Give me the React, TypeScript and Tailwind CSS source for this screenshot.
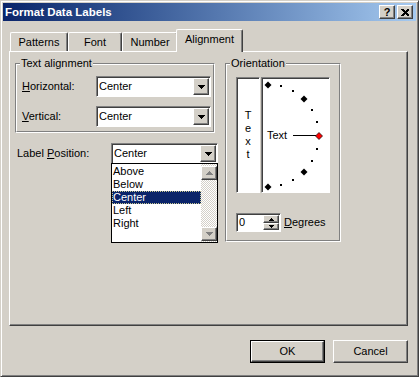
import React from "react";

const RAISED =
  "border border-t-white border-l-white border-r-[#404040] border-b-[#404040] shadow-[inset_-1px_-1px_#808080]";
const SUNKEN =
  "border border-t-[#808080] border-l-[#808080] border-r-white border-b-white shadow-[inset_1px_1px_#404040]";

function Arrow({ color = "#000", up = false }: { color?: string; up?: boolean }) {
  const rows = up ? [3, 2, 1, 0] : [0, 1, 2, 3];
  return (
    <svg width="7" height="4" viewBox="0 0 7 4" shapeRendering="crispEdges">
      {rows.map((r, i) => (
        <rect key={i} x={r} y={i} width={7 - r * 2} height={1} fill={color} />
      ))}
    </svg>
  );
}

function SmallArrow({ up = false, color = "#000" }: { up?: boolean; color?: string }) {
  return (
    <svg width="5" height="3" viewBox="0 0 5 3" shapeRendering="crispEdges">
      {up ? (
        <>
          <rect x={2} y={0} width={1} height={1} fill={color} />
          <rect x={1} y={1} width={3} height={1} fill={color} />
          <rect x={0} y={2} width={5} height={1} fill={color} />
        </>
      ) : (
        <>
          <rect x={0} y={0} width={5} height={1} fill={color} />
          <rect x={1} y={1} width={3} height={1} fill={color} />
          <rect x={2} y={2} width={1} height={1} fill={color} />
        </>
      )}
    </svg>
  );
}

function Combo({ value, className }: { value: string; className: string }) {
  return (
    <div className={`${SUNKEN} ${className} h-[21px] bg-white p-[1px] flex items-center`}>
      <span className="flex-1 pl-[1px] leading-[13px]">{value}</span>
      <div className={`${RAISED} bg-[#d4d0c8] w-[16px] h-[17px] flex items-center justify-center`}>
        <Arrow />
      </div>
    </div>
  );
}

function Group({
  label,
  className,
  children,
}: {
  label: string;
  className: string;
  children: React.ReactNode;
}) {
  return (
    <div
      className={`relative border border-t-[#808080] border-l-[#808080] border-r-white border-b-white ${className}`}
    >
      <div className="h-full border border-t-white border-l-white border-r-[#808080] border-b-[#808080]">
        {children}
      </div>
      <span className="absolute -top-[7px] left-[4px] bg-[#d4d0c8] px-[1px] leading-[13px]">{label}</span>
    </div>
  );
}

function Tab({ label, w, active }: { label: string; w: string; active?: boolean }) {
  return (
    <div
      className={`${w} ${
        active ? "h-[23px] -mb-[1px] -mx-[2px] pt-[3px] relative z-10" : "h-[19px] pt-[3px]"
      } bg-[#d4d0c8] rounded-t-[2px] border-l border-t border-r border-t-white border-l-white border-r-[#404040] shadow-[inset_-1px_0_#808080] text-center leading-[13px]`}
    >
      {label}
    </div>
  );
}

function OrientationDial() {
  const cx = 6;
  const cy = 57.5;
  const r = 51;
  const pt = (deg: number) => {
    const a = (deg * Math.PI) / 180;
    return [cx + r * Math.sin(a), cy - r * Math.cos(a)];
  };
  const dots = [15, 30, 60, 75, 105, 120, 150, 165].map(pt);
  const diamonds = [0, 45, 135, 180].map(pt);
  const diamond = (x: number, y: number) =>
    `${x},${y - 3.5} ${x + 3.5},${y} ${x},${y + 3.5} ${x - 3.5},${y}`;
  const [rx, ry] = pt(90);
  return (
    <svg className="absolute left-0 top-0" width="67" height="114" viewBox="0 0 67 114">
      {dots.map(([x, y], i) => (
        <rect key={i} x={Math.round(x) - 1} y={Math.round(y) - 1} width={2} height={2} fill="#000" />
      ))}
      {diamonds.map(([x, y], i) => (
        <polygon key={i} points={diamond(Math.round(x), Math.round(y))} fill="#000" />
      ))}
      <rect x={31} y={57} width={23} height={1} fill="#000" />
      <polygon points={diamond(Math.round(rx), Math.round(ry))} fill="#ff0000" stroke="#000" strokeWidth={0.7} />
    </svg>
  );
}

export default function App() {
  return (
    <div
      className="w-[419px] h-[377px] bg-[#d4d0c8] border border-t-[#d4d0c8] border-l-[#d4d0c8] border-r-[#404040] border-b-[#404040] shadow-[inset_1px_1px_white,inset_-1px_-1px_#808080] p-[2px] flex flex-col text-[11px] text-black"
      style={{ fontFamily: '"Liberation Sans", Arial, sans-serif' }}
    >
      {/* caption */}
      <div className="h-[18px] shrink-0 flex items-center bg-linear-to-r from-[#0a246a] to-[#a6caf0] pl-[2px] pr-[3px]">
        <span className="flex-1 font-bold text-white text-[11.5px] leading-[13px]">Format Data Labels</span>
        <div className={`${RAISED} bg-[#d4d0c8] w-[16px] h-[14px] flex items-center justify-center font-bold text-[11px] leading-[11px]`}>
          ?
        </div>
        <div className={`${RAISED} bg-[#d4d0c8] w-[16px] h-[14px] ml-[2px] flex items-center justify-center`}>
          <svg width="8" height="7" viewBox="0 0 8 7" shapeRendering="crispEdges">
            <path d="M0 0h2l2 2 2-2h2v1l-2.5 2.5L8 6v1H6L4 5 2 7H0V6l2.5-2.5L0 1z" fill="#000" />
          </svg>
        </div>
      </div>

      {/* tabs */}
      <div className="mt-[8px] ml-[7px] h-[22px] flex items-end relative z-10">
        <Tab label="Patterns" w="w-[58px]" />
        <Tab label="Font" w="w-[54px]" />
        <Tab label="Number" w="w-[56px]" />
        <Tab label="Alignment" w="w-[67px]" active />
      </div>

      {/* panel */}
      <div className="ml-[6px] w-[399px] h-[275px] shrink-0 border border-t-white border-l-white border-r-[#404040] border-b-[#404040] shadow-[inset_-1px_-1px_#808080] flex">
        {/* left column */}
        <div className="ml-[5px] w-[203px] flex flex-col">
          <Group label="Text alignment" className="mt-[11px] w-[200px] h-[70px]">
            <div className="pt-[11px] pl-[5px] flex flex-col gap-[9px]">
              <div className="flex items-center">
                <span className="w-[74px]">
                  <u>H</u>orizontal:
                </span>
                <Combo value="Center" className="w-[115px]" />
              </div>
              <div className="flex items-center">
                <span className="w-[74px]">
                  <u>V</u>ertical:
                </span>
                <Combo value="Center" className="w-[115px]" />
              </div>
            </div>
          </Group>

          <div className="mt-[10px] flex items-center">
            <span className="w-[96px] pl-[2px]">
              Label <u>P</u>osition:
            </span>
            <div className="relative">
              <Combo value="Center" className="w-[107px]" />
              <div className="absolute left-0 top-[20px] w-[107px] h-[80px] border border-black bg-white flex z-20">
                <div className="w-[89px] pt-[1px] flex flex-col">
                  {["Above", "Below", "Center", "Left", "Right"].map((item) => (
                    <div
                      key={item}
                      className={`h-[13px] leading-[13px] pl-[1px] ${
                        item === "Center"
                          ? "bg-[#0a246a] text-white outline-1 outline-dotted -outline-offset-1 outline-[#c8c890]"
                          : ""
                      }`}
                    >
                      {item}
                    </div>
                  ))}
                </div>
                <div className="w-[16px] flex flex-col bg-[repeating-conic-gradient(#d4d0c8_0_25%,#ffffff_0_50%)] bg-[length:2px_2px]">
                  <div className={`${RAISED} mt-[2px] h-[14px] bg-[#d4d0c8] flex items-center justify-center`}>
                    <Arrow up color="#808080" />
                  </div>
                  <div className="flex-1" />
                  <div className={`${RAISED} mb-[1px] h-[14px] bg-[#d4d0c8] flex items-center justify-center`}>
                    <Arrow color="#808080" />
                  </div>
                </div>
              </div>
            </div>
          </div>
        </div>

        {/* right column */}
        <div className="ml-[7px]">
          <Group label="Orientation" className="mt-[11px] w-[116px] h-[179px]">
            <div className="pt-[12px] pl-[9px]">
              <div className="flex gap-[1px]">
                <div className={`${SUNKEN} w-[24px] h-[116px] bg-white flex flex-col items-center justify-center leading-[13px]`}>
                  <span>T</span>
                  <span>e</span>
                  <span>x</span>
                  <span>t</span>
                </div>
                <div className={`${SUNKEN} relative w-[69px] h-[116px] bg-white`}>
                  <OrientationDial />
                  <span className="absolute left-[5px] top-[51px] leading-[13px]">Text</span>
                </div>
              </div>
              <div className="mt-[20px] flex items-center">
                <div className={`${SUNKEN} w-[45px] h-[19px] bg-white p-[1px] flex`}>
                  <span className="flex-1 pl-[1px] leading-[15px]">0</span>
                  <div className="w-[16px] flex flex-col">
                    <div className={`${RAISED} h-[8px] bg-[#d4d0c8] flex items-center justify-center`}>
                      <SmallArrow up />
                    </div>
                    <div className={`${RAISED} h-[7px] bg-[#d4d0c8] flex items-center justify-center`}>
                      <SmallArrow />
                    </div>
                  </div>
                </div>
                <span className="ml-[3px]">
                  <u>D</u>egrees
                </span>
              </div>
            </div>
          </Group>
        </div>
      </div>

      {/* buttons */}
      <div className="mt-[14px] pr-[8px] flex justify-end gap-[8px]">
        <div className="w-[75px] h-[23px] border border-black">
          <div className={`${RAISED} h-full flex items-center justify-center`}>OK</div>
        </div>
        <div className={`${RAISED} w-[75px] h-[23px] flex items-center justify-center`}>Cancel</div>
      </div>
    </div>
  );
}
